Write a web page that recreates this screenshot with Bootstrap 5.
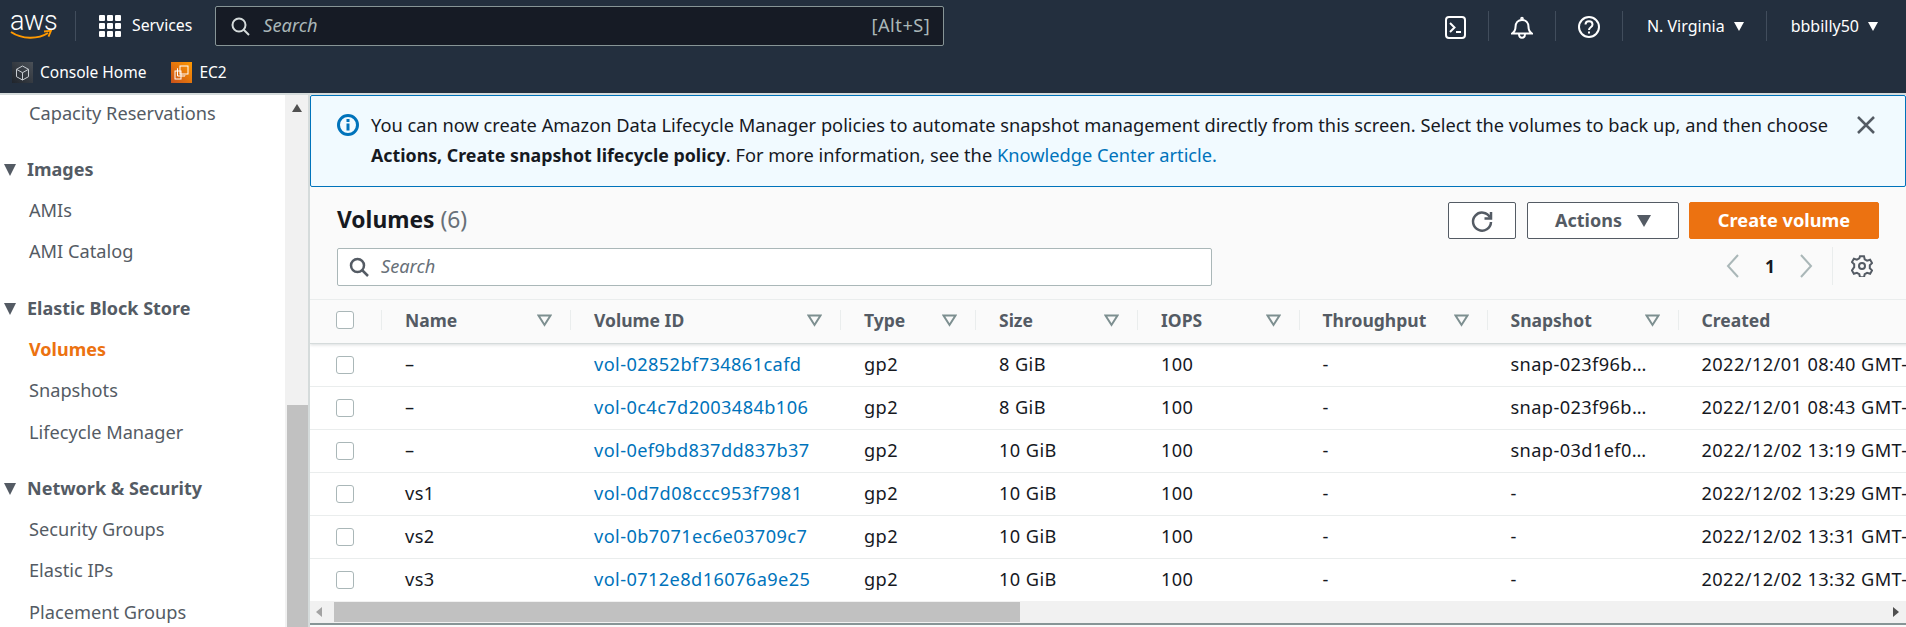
<!DOCTYPE html>
<html lang="en">
<head>
<meta charset="UTF-8">
<title>Volumes | EC2 Management Console</title>
<link rel="stylesheet" href="https://cdn.jsdelivr.net/npm/bootstrap@5.3.0/dist/css/bootstrap.min.css">
<style>
  html, body { height: 627px; overflow: hidden; }
  body { font-family: "Noto Sans", Roboto, sans-serif; font-size: 18.2px; color: #16191f; background: #fff; }

  /* top bar */
  .top-head { background: #232f3e; height: 93px; color: #fff; flex: none; }
  .top-row { height: 52px; padding-left: 10px; }
  .sub-row { height: 41px; padding-left: 12px; font-size: 15.5px; }
  .aws-logo { width: 42px; height: 27px; margin-top: -1px; }
  .aws-word { font-family: Roboto, sans-serif; font-weight: 300; font-size: 27px; line-height: 19px; letter-spacing: -.4px; display: block; height: 18px; }
  .top-sep { width: 1px; height: 30px; background: #414d5c; flex: none; }
  .sep-logo { margin-left: 23px; margin-right: 23px; }
  .svc-label { font-size: 15.8px; margin-left: 11px; margin-right: 23px; }
  .top-search { width: 729px; height: 40px; background: #161b25; border: 1px solid #879596; border-radius: 2px; padding: 0 13px 0 15px; color: #aab7b8; }
  .top-search em { margin-left: 13px; }
  .top-search span { letter-spacing: .5px; }
  .top-right { margin-left: auto; padding-right: 28px; }
  .ic-cell { padding: 0 22px; }
  .region-label { font-size: 16px; padding: 0 24px; }
  .region-first { padding-right: 22px; }
  .down-tri { width: 0; height: 0; border-left: 5px solid transparent; border-right: 5px solid transparent; border-top: 9px solid #fff; margin-left: 9px; }
  .tile { width: 21px; height: 21px; margin-right: 7px; }
  .tile-home { background: linear-gradient(45deg, #1f242b, #4b5158); }
  .tile-ec2 { background: linear-gradient(45deg, #c8511b, #f90); margin-left: 25px; }

  /* side navigation */
  .main-area { height: 534px; border-top: 2px solid #d5dbdb; }
  .side-nav { width: 285px; flex: none; overflow: hidden; color: #545b64; }
  .side-nav ul { margin: -2.500px 0 0; padding: 0; list-style: none; }
  .nav-entry { height: 41.3px; line-height: 41.3px; padding-left: 29px; white-space: nowrap; }
  .nav-head { margin-top: 15px; padding-left: 4px; font-size: 18px; font-weight: 700; }
  .nav-head i { display: inline-block; width: 0; height: 0; border-left: 6.5px solid transparent; border-right: 6.5px solid transparent; border-top: 12px solid #545b64; margin-right: 11px; }
  .nav-active { color: #ec7211; font-size: 18px; font-weight: 700; }
  .side-scroll { width: 24px; flex: none; background: #f1f1f1; padding: 9px 2px 0; border-right: 1px solid #d5dbdb; }
  .up-tri { width: 0; height: 0; border-left: 5px solid transparent; border-right: 5px solid transparent; border-bottom: 8px solid #505050; margin: 0 auto; }
  .side-thumb { background: #c1c1c1; width: 21px; height: 224px; margin-top: 293px; }

  /* flash */
  .main-col { min-width: 0; border-left: 1px solid #d5dbdb; background: #fafafa; }
  .flash-box { height: 92px; margin: 0; padding: 14px 29px 0 26px; background: #f1faff; border: 1px solid #0073bb; border-radius: 2px; color: #16191f; font-size: 18.25px; line-height: 30px; }
  .flash-box a, .vol-link { color: #0073bb; text-decoration: none; }
  .flash-box b { font-size: 17.8px; }
  .flash-ic { width: 22px; height: 22px; flex: none; margin: 4px 12px 0 0; }
  .flash-x { width: 20px; height: 20px; flex: none; margin: 5px 0 0 auto; }

  /* volumes header */
  .vol-head { height: 112px; padding: 15px 27px 0 27px; }
  .vol-title { font-size: 22.8px; font-weight: 700; margin: 0; padding-bottom: 2px; line-height: 35px; }
  .vol-title span { font-weight: 400; color: #687078; }
  .tool-btn { height: 37px; border: 1px solid #545b64; border-radius: 2px; background: #fff; color: #545b64; font-weight: 700; font-size: 18px; padding: 0; }
  .btn-refresh { width: 68px; margin-right: 11px; }
  .btn-actions { width: 152px; margin-right: 10px; }
  .act-tri { display: inline-block; width: 0; height: 0; border-left: 7px solid transparent; border-right: 7px solid transparent; border-top: 12px solid #545b64; margin-left: 15px; }
  .btn-create { width: 190px; background: #ec7211; border-color: #ec7211; color: #fff; font-size: 18.2px; }
  .vol-search { width: 875px; height: 38px; margin-top: 9px; background: #fff; border: 1px solid #aab7b8; border-radius: 2px; padding-left: 11px; color: #687078; }
  .vol-search em { margin-left: 12px; }
  .pager { margin-top: 8px; height: 38px; margin-left: auto; margin-right: 6px; font-weight: 700; }
  .pager-num { margin: 0 24px 0 25px; font-size: 17.5px; }
  .pager-sep { width: 1px; height: 38px; background: #eaeded; margin-left: 19px; margin-right: 18px; }

  /* table */
  .tbl-clip { height: 302px; overflow: hidden; background: #fff; border-top: 1px solid #eaeded; }
  .vol-table { width: 1668.5px; table-layout: fixed; margin: 0; color: #16191f; }
  .vol-table > :not(caption) > * > * { padding: 0; box-shadow: none; background: transparent; color: inherit; vertical-align: middle; border-bottom: 1px solid #eaeded; white-space: nowrap; overflow: hidden; }
  .vol-table thead th { height: 43px; padding-bottom: 2px; background: #fafafa; color: #545b64; font-size: 17.5px; font-weight: 700; border-bottom: 1px solid #d5dbdb; }
  .vol-table tbody td { height: 43px; padding-left: 23px; letter-spacing: .4px; }
  .vol-table tbody td:first-child { padding-left: 26px; }
  .th-in { height: 20px; padding: 0 18px 0 23px; border-right: 1px solid #eaeded; }
  .th-check { padding-left: 26px; }
  .th-last { border-right: 0; }
  .w-check { width: 72px; } .w-name { width: 189px; } .w-volid { width: 270px; } .w-type { width: 135px; }
  .w-size { width: 162px; } .w-iops { width: 161.5px; } .w-thru { width: 188px; } .w-snap { width: 191px; } .w-made { width: 300px; }
  .row-check.form-check-input { width: 18px; height: 18px; margin: 0; display: block; border: 1px solid #aab7b8; border-radius: 3px; }
  .table-shadow { box-shadow: 0 2px 3px rgba(0, 28, 36, .15); }

  /* fake horizontal scrollbar */
  .h-scroll { height: 24px; background: #f1f1f1; border-bottom: 2px solid #879596; padding: 1px 7px 1px 6px; }
  .h-left { width: 0; height: 0; border-top: 5px solid transparent; border-bottom: 5px solid transparent; border-right: 6px solid #a3a3a3; }
  .h-thumb { width: 686px; height: 20px; background: #c1c1c1; margin-left: 12px; }
  .h-right { width: 0; height: 0; border-top: 5px solid transparent; border-bottom: 5px solid transparent; border-left: 6px solid #505050; margin-left: auto; }
</style>
</head>
<body class="d-flex flex-column">

<header class="top-head">
  <div class="top-row d-flex align-items-center">
    <div class="aws-logo flex-none">
      <span class="aws-word">aws</span>
      <svg width="43" height="10" viewBox="0 0 43 10" class="d-block"><path d="M1 2c11 7.500 27 7.500 37 1" fill="none" stroke="#f90" stroke-width="2"/><path d="M34 1.500l7-.8-2.500 6" fill="none" stroke="#f90" stroke-width="1.800"/></svg>
    </div>
    <div class="top-sep sep-logo"></div>
    <svg width="22" height="22" viewBox="0 0 22 22" fill="#fff"><rect width="6" height="6" rx="1"/><rect x="8" width="6" height="6" rx="1"/><rect x="16" width="6" height="6" rx="1"/><rect y="8" width="6" height="6" rx="1"/><rect x="8" y="8" width="6" height="6" rx="1"/><rect x="16" y="8" width="6" height="6" rx="1"/><rect y="16" width="6" height="6" rx="1"/><rect x="8" y="16" width="6" height="6" rx="1"/><rect x="16" y="16" width="6" height="6" rx="1"/></svg>
    <span class="svc-label">Services</span>
    <div class="top-search d-flex align-items-center">
      <svg width="19" height="19" viewBox="0 0 19 19" fill="none" stroke="#d5dbdb" stroke-width="2"><circle cx="8" cy="8" r="6.500"/><path d="M12.500 12.500l5.500 5.500"/></svg>
      <em>Search</em>
      <span class="ms-auto">[Alt+S]</span>
    </div>
    <div class="top-right d-flex align-items-center">
      <div class="ic-cell"><svg width="21" height="23" viewBox="0 0 21 23" fill="none" stroke="#fff" stroke-width="2"><rect x="1" y="1" width="19" height="21" rx="3"/><path d="M5 7l4.500 4.500L5 16M11 16h5"/></svg></div>
      <div class="top-sep"></div>
      <div class="ic-cell"><svg width="22" height="23" viewBox="0 0 22 23" fill="none" stroke="#fff" stroke-width="2"><path d="M1 17.500c2.500-1.500 3.500-3 3.500-6.500 0-4 2.500-7 6.500-7s6.500 3 6.500 7c0 3.500 1 5 3.500 6.500z"/><circle cx="11" cy="2.500" r=".8"/><path d="M8 18c0 5 6 5 6 0"/></svg></div>
      <div class="top-sep"></div>
      <div class="ic-cell"><svg width="22" height="22" viewBox="0 0 22 22" fill="none" stroke="#fff" stroke-width="2"><circle cx="11" cy="11" r="10"/><path d="M7.500 8.500c0-4.500 7-4.500 7 0 0 3-3.500 2.500-3.500 5.500"/><path d="M11 15.500v2"/></svg></div>
      <div class="top-sep"></div>
      <div class="region-label region-first d-flex align-items-center">N. Virginia<span class="down-tri"></span></div>
      <div class="top-sep"></div>
      <div class="region-label d-flex align-items-center pe-0">bbbilly50<span class="down-tri"></span></div>
    </div>
  </div>
  <div class="sub-row d-flex align-items-center">
    <span class="tile tile-home d-flex align-items-center justify-content-center"><svg width="15" height="16" viewBox="0 0 15 16" fill="none" stroke="#c9ced3" stroke-width="1"><path d="M7.500 1l6 3.300v7.400l-6 3.300-6-3.300V4.300zM1.500 4.300l6 3.400 6-3.400M7.500 7.700V15"/></svg></span>
    <span>Console Home</span>
    <span class="tile tile-ec2 d-flex align-items-center justify-content-center"><svg width="15" height="15" viewBox="0 0 15 15" fill="none" stroke="#fff" stroke-width="1"><rect x="6" y="1" width="8" height="8"/><path d="M4 3.500H3.500V11h7.500v-.5"/><rect x="1" y="6" width="6" height="8"/></svg></span>
    <span>EC2</span>
  </div>
</header>

<div class="main-area d-flex">
  <nav class="side-nav">
    <ul>
      <li class="nav-entry">Capacity Reservations</li>
      <li class="nav-entry nav-head"><i></i>Images</li>
      <li class="nav-entry">AMIs</li>
      <li class="nav-entry">AMI Catalog</li>
      <li class="nav-entry nav-head"><i></i>Elastic Block Store</li>
      <li class="nav-entry nav-active">Volumes</li>
      <li class="nav-entry">Snapshots</li>
      <li class="nav-entry">Lifecycle Manager</li>
      <li class="nav-entry nav-head"><i></i>Network &amp; Security</li>
      <li class="nav-entry">Security Groups</li>
      <li class="nav-entry">Elastic IPs</li>
      <li class="nav-entry">Placement Groups</li>
    </ul>
  </nav>
  <div class="side-scroll">
    <div class="up-tri"></div>
    <div class="side-thumb"></div>
  </div>

  <main class="main-col flex-grow-1">
    <div class="alert flash-box d-flex" role="alert">
      <svg class="flash-ic" viewBox="0 0 22 22"><circle cx="11" cy="11" r="9.500" fill="none" stroke="#0073bb" stroke-width="3"/><rect x="9.500" y="5" width="3" height="3" fill="#0073bb"/><rect x="9.500" y="9.500" width="3" height="7" fill="#0073bb"/></svg>
      <div>You can now create Amazon Data Lifecycle Manager policies to automate snapshot management directly from this screen. Select the volumes to back up, and then choose<br><b>Actions, Create snapshot lifecycle policy</b>. For more information, see the <a href="#">Knowledge Center article.</a></div>
      <svg class="flash-x" viewBox="0 0 20 20" fill="none" stroke="#545b64" stroke-width="2.500"><path d="M2 2l16 16M18 2L2 18"/></svg>
    </div>

    <div class="vol-head">
      <div class="d-flex align-items-center justify-content-between">
        <h2 class="vol-title">Volumes <span>(6)</span></h2>
        <div class="d-flex">
          <button class="btn tool-btn btn-refresh" type="button"><svg width="24" height="24" viewBox="0 0 24 24" fill="none" stroke="#545b64" stroke-width="2.500"><path d="M20 7.500A9 9 0 1 0 21 12"/><path d="M21 2v6.500h-6.500"/></svg></button>
          <button class="btn tool-btn btn-actions" type="button">Actions<span class="act-tri"></span></button>
          <button class="btn tool-btn btn-create" type="button">Create volume</button>
        </div>
      </div>
      <div class="d-flex">
        <div class="vol-search d-flex align-items-center">
          <svg width="20" height="20" viewBox="0 0 20 20" fill="none" stroke="#545b64" stroke-width="2.500"><circle cx="8.500" cy="8.500" r="6.500"/><path d="M13 13l6 6"/></svg>
          <em>Search</em>
        </div>
        <div class="pager d-flex align-items-center">
          <svg width="14" height="26" viewBox="0 0 14 26" fill="none" stroke="#aab7b8" stroke-width="2"><path d="M12 2L2 13l10 11"/></svg>
          <span class="pager-num">1</span>
          <svg width="14" height="26" viewBox="0 0 14 26" fill="none" stroke="#aab7b8" stroke-width="2"><path d="M2 2l10 11L2 24"/></svg>
          <span class="pager-sep"></span>
          <svg width="22" height="22" viewBox="0 0 22 22" fill="none" stroke="#545b64" stroke-width="2"><path d="M9 1.500h4l.7 3 2.400 1.300 3-.9 2 3.400-2.300 2.200v2.900l2.300 2.200-2 3.400-3-.9-2.400 1.300-.7 3H9l-.7-3-2.400-1.300-3 .9-2-3.400L3.200 12.400V9.500L.9 7.300l2-3.400 3 .9 2.400-1.300z" transform="translate(0 -.2)"/><circle cx="11" cy="11" r="3"/></svg>
        </div>
      </div>
    </div>

    <div class="tbl-clip">
      <table class="table vol-table">
        <colgroup>
          <col class="w-check"><col class="w-name"><col class="w-volid"><col class="w-type"><col class="w-size"><col class="w-iops"><col class="w-thru"><col class="w-snap"><col class="w-made">
        </colgroup>
        <thead class="table-shadow">
          <tr>
            <th><div class="th-in th-check d-flex align-items-center"><input class="form-check-input row-check" type="checkbox"></div></th>
            <th><div class="th-in d-flex align-items-center justify-content-between">Name<svg width="15" height="13" viewBox="0 0 15 13" fill="none" stroke="#7d8f90" stroke-width="2"><path d="M1.500 1.500h12L7.500 11z"/></svg></div></th>
            <th><div class="th-in d-flex align-items-center justify-content-between">Volume ID<svg width="15" height="13" viewBox="0 0 15 13" fill="none" stroke="#7d8f90" stroke-width="2"><path d="M1.500 1.500h12L7.500 11z"/></svg></div></th>
            <th><div class="th-in d-flex align-items-center justify-content-between">Type<svg width="15" height="13" viewBox="0 0 15 13" fill="none" stroke="#7d8f90" stroke-width="2"><path d="M1.500 1.500h12L7.500 11z"/></svg></div></th>
            <th><div class="th-in d-flex align-items-center justify-content-between">Size<svg width="15" height="13" viewBox="0 0 15 13" fill="none" stroke="#7d8f90" stroke-width="2"><path d="M1.500 1.500h12L7.500 11z"/></svg></div></th>
            <th><div class="th-in d-flex align-items-center justify-content-between">IOPS<svg width="15" height="13" viewBox="0 0 15 13" fill="none" stroke="#7d8f90" stroke-width="2"><path d="M1.500 1.500h12L7.500 11z"/></svg></div></th>
            <th><div class="th-in d-flex align-items-center justify-content-between">Throughput<svg width="15" height="13" viewBox="0 0 15 13" fill="none" stroke="#7d8f90" stroke-width="2"><path d="M1.500 1.500h12L7.500 11z"/></svg></div></th>
            <th><div class="th-in d-flex align-items-center justify-content-between">Snapshot<svg width="15" height="13" viewBox="0 0 15 13" fill="none" stroke="#7d8f90" stroke-width="2"><path d="M1.500 1.500h12L7.500 11z"/></svg></div></th>
            <th><div class="th-in th-last d-flex align-items-center">Created</div></th>
          </tr>
        </thead>
        <tbody id="volRows"></tbody>
      </table>
    </div>
    <div class="h-scroll d-flex align-items-center">
      <span class="h-left"></span>
      <span class="h-thumb"></span>
      <span class="h-right"></span>
    </div>
  </main>
</div>

<script src="https://cdn.jsdelivr.net/npm/bootstrap@5.3.0/dist/js/bootstrap.bundle.min.js"></script>
<script>
  const volumes = [
    ["–", "vol-02852bf734861cafd", "8 GiB", "snap-023f96b…", "2022/12/01 08:40 GMT-5"],
    ["–", "vol-0c4c7d2003484b106", "8 GiB", "snap-023f96b…", "2022/12/01 08:43 GMT-5"],
    ["–", "vol-0ef9bd837dd837b37", "10 GiB", "snap-03d1ef0…", "2022/12/02 13:19 GMT-5"],
    ["vs1", "vol-0d7d08ccc953f7981", "10 GiB", "-", "2022/12/02 13:29 GMT-5"],
    ["vs2", "vol-0b7071ec6e03709c7", "10 GiB", "-", "2022/12/02 13:31 GMT-5"],
    ["vs3", "vol-0712e8d16076a9e25", "10 GiB", "-", "2022/12/02 13:32 GMT-5"]
  ];
  const tbody = document.getElementById("volRows");
  volumes.forEach(v => {
    tbody.innerHTML += `
      <tr>
        <td><input class="form-check-input row-check" type="checkbox"></td>
        <td>${v[0]}</td>
        <td><a class="vol-link" href="#">${v[1]}</a></td>
        <td>gp2</td>
        <td>${v[2]}</td>
        <td>100</td>
        <td>-</td>
        <td>${v[3]}</td>
        <td>${v[4]}</td>
      </tr>`;
  });
</script>
</body>
</html>
